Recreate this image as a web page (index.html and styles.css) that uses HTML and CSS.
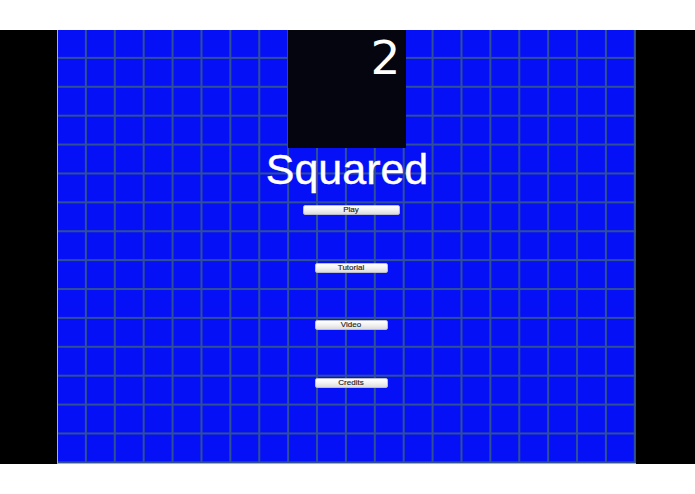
FILE: index.html
```html
<!DOCTYPE html>
<html>
<head>
<meta charset="utf-8">
<title>Squared</title>
<link rel="stylesheet" href="styles.css">
</head>
<body>
<div class="top-band"></div>
<div class="stage">
  <div class="canvas">
    <div class="score-box"><span class="score">2</span></div>
    <h1 class="title">Squared</h1>
    <div class="menu">
      <button class="btn btn-wide">Play</button>
      <button class="btn">Tutorial</button>
      <button class="btn">Video</button>
      <button class="btn">Credits</button>
    </div>
  </div>
</div>
<div class="bottom-band"></div>
</body>
</html>
```

FILE: styles.css
```css
html, body {
  margin: 0;
  padding: 0;
  background: #ffffff;
  width: 695px;
  height: 494px;
  overflow: hidden;
}

.top-band {
  height: 30px;
  background: #ffffff;
}

.bottom-band {
  height: 30px;
  background: #ffffff;
}

.stage {
  height: 434px;
  background: #000000;
  display: flex;
  justify-content: flex-start;
  padding-left: 57px;
}

.canvas {
  width: 579px;
  height: 434px;
  box-sizing: border-box;
  border-left: 1px solid #a7abd6;
  border-bottom: 1px solid #a7abd6;
  background-color: #0610f6;
  background-image:
    linear-gradient(to right, transparent calc(100% - 1.6px), #2f5096 calc(100% - 1.6px)),
    linear-gradient(to bottom, transparent calc(100% - 1.6px), #2f5096 calc(100% - 1.6px));
  background-size: 28.9px 28.9px;
  background-position: 0 0;
  display: flex;
  flex-direction: column;
  align-items: center;
}

.score-box {
  width: 118px;
  height: 118px;
  background: #050510;
  display: flex;
  justify-content: flex-end;
  align-items: flex-start;
  box-sizing: border-box;
  padding-right: 5px;
  margin-left: -1px;
}

.score {
  font-family: "DejaVu Sans", sans-serif;
  font-size: 47px;
  line-height: 56px;
  color: #ffffff;
}

.title {
  margin: 0;
  font-family: "Liberation Sans", Arial, sans-serif;
  font-weight: normal;
  font-size: 43px;
  line-height: 42px;
  color: #ffffff;
  -webkit-text-stroke: 0.4px #ffffff;
}

.menu {
  margin-top: 15px;
  padding-left: 8px;
  display: flex;
  flex-direction: column;
  align-items: center;
  gap: 47.7px;
}

.btn {
  width: 73px;
  height: 10px;
  padding: 0;
  margin: 0;
  box-sizing: border-box;
  border: 1px solid #b9bccc;
  border-radius: 2px;
  background: linear-gradient(to bottom, #ffffff 0%, #f2f2f2 50%, #dcdcdc 100%);
  font-family: "Liberation Sans", Arial, sans-serif;
  font-size: 8px;
  line-height: 8px;
  color: #1e1e1e;
  text-align: center;
  -webkit-text-stroke: 0.15px #1e1e1e;
}

.btn-wide {
  width: 97px;
}
```
